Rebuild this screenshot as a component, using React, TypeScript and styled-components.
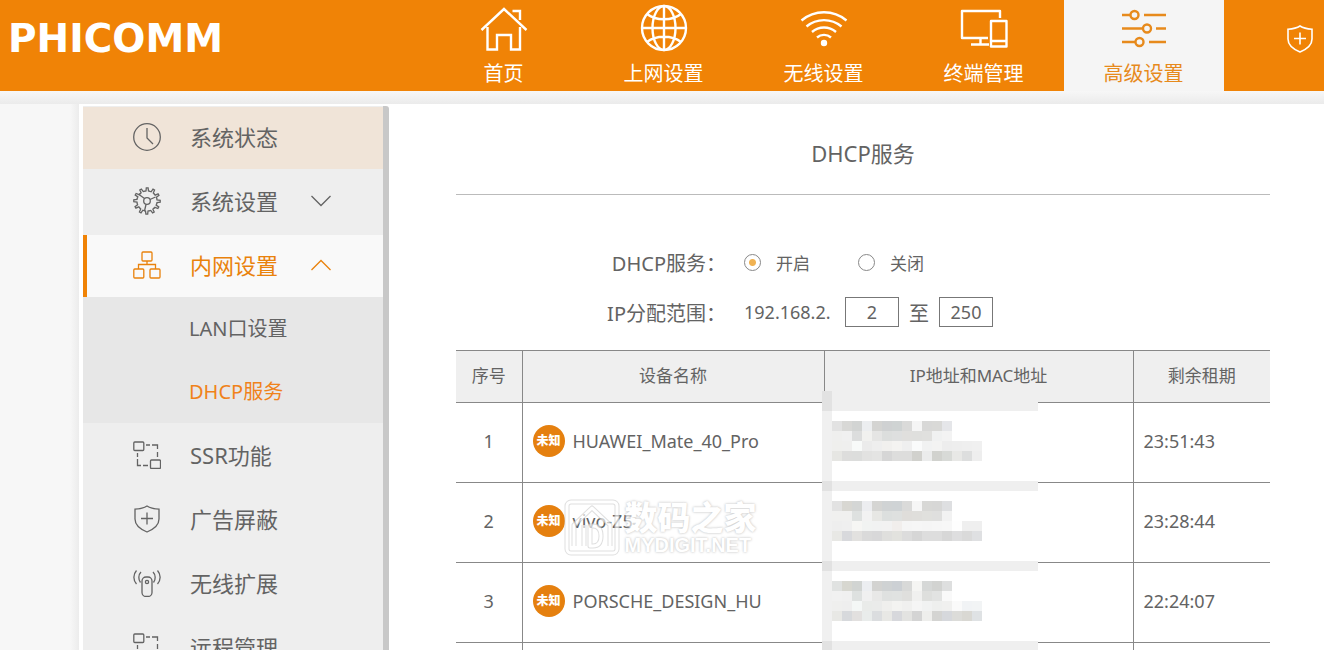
import React from "react";
import styled, { createGlobalStyle, css } from "styled-components";

const ORANGE = "#f08306";
const INK = "#636363";

const GlobalStyle = createGlobalStyle`
  *, *::before, *::after { box-sizing: border-box; }
  body {
    margin: 0;
    background: #f5f5f5;
    color: ${INK};
    font-family: "Noto Sans", "Noto Sans CJK SC", sans-serif;
    font-weight: 400;
    font-size: 18px;
  }
`;

/* ---------- page frame ---------- */

const Page = styled.div`
  display: flex;
  flex-direction: column;
  height: 100vh;
  overflow: hidden;
`;

const Header = styled.header`
  display: flex;
  flex: none;
  height: 91px;
  background: ${ORANGE};
  color: #fff;
`;

const Brand = styled.h1`
  flex: 1;
  margin: 0;
  padding: 16px 0 0 8px;
  font: bold 39px/46px "DejaVu Sans", sans-serif;
`;

const Nav = styled.nav`
  display: flex;
`;

const NavLink = styled.a<{ $active?: boolean }>`
  display: flex;
  flex-direction: column;
  align-items: center;
  gap: 7px;
  width: 160px;
  padding: 4px 1px 0 0;
  font-size: 20px;
  line-height: 30px;
  text-decoration: none;
  color: ${(p) => (p.$active ? "#e78a1c" : "#fff")};
  background: ${(p) => (p.$active ? "#f5f5f5" : "transparent")};
`;

const GuardButton = styled.button`
  width: 100px;
  padding: 0 10px 14px 0;
  border: 0;
  background: none;
  color: #fff;
  display: flex;
  align-items: center;
  justify-content: flex-end;
`;

const Stage = styled.div`
  display: flex;
  flex: 1;
  min-height: 0;
  padding: 13px 0 0 79px;
  background: linear-gradient(#f7f7f7, #ebebeb 13px, transparent 13px), linear-gradient(90deg, #f7f7f7 70px, #ececec 79px);
`;

const Panel = styled.div`
  display: flex;
  flex: 1;
  min-width: 0;
  padding: 2px 0 0 4px;
  background: #fff;
`;

/* ---------- side menu ---------- */

const Side = styled.aside`
  flex: none;
  width: 306px;
  border-right: 6px solid #c8c8c8;
  border-top-right-radius: 3px;
  background: #eee;
  overflow: hidden;
`;

const Menu = styled.ul`
  display: flex;
  flex-direction: column;
  gap: 2px;
  margin: 0;
  padding: 1px 0 0;
  list-style: none;
`;

const MenuLink = styled.a<{ $tone?: "visited" | "open" }>`
  display: flex;
  align-items: center;
  height: 62px;
  padding: 0 0 2px 50px;
  font-size: 22px;
  color: ${INK};
  text-decoration: none;
  ${(p) => p.$tone === "visited" && css`background: #f0e4d8;`}
  ${(p) =>
    p.$tone === "open" &&
    css`
      background: #f9f9f9;
      color: #e9820c;
      box-shadow: inset 4px 0 ${ORANGE};
    `}
`;

const MenuText = styled.span`
  margin: 0 33px 0 29px;
  padding-bottom: 2px;
`;

const SubMenu = styled.ul`
  margin: 0;
  padding: 0;
  list-style: none;
  background: #e7e7e7;
`;

const SubLink = styled.a<{ $active?: boolean }>`
  display: flex;
  align-items: center;
  height: 63px;
  padding: 0 0 2px 106px;
  font-size: 20px;
  text-decoration: none;
  color: ${(p) => (p.$active ? "#f0821a" : INK)};
`;

/* ---------- content ---------- */

const Content = styled.main`
  flex: 1;
  min-width: 0;
  padding: 0 54px 0 67px;
`;

const Title = styled.h2`
  margin: 0 0 42px;
  padding: 31px 0 25px;
  border-bottom: 1px solid #bbb;
  text-align: center;
  font-size: 22px;
  line-height: 32px;
  font-weight: inherit;
`;

const Field = styled.div`
  display: grid;
  grid-template-columns: 270px 1fr;
  column-gap: 18px;
  align-items: center;
  height: 50px;
`;

const FieldName = styled.span`
  text-align: right;
  font-size: 20px;
`;

const Options = styled.div`
  display: flex;
  gap: 48px;
`;

const Option = styled.label`
  display: flex;
  align-items: center;
  gap: 15px;
  font-size: 17px;
`;

const Radio = styled.input`
  appearance: none;
  width: 17px;
  height: 17px;
  margin: 0;
  border: 1px solid #888;
  border-radius: 50%;
  background: #fff;
  &:checked {
    background: radial-gradient(circle, #f0b252 3px, #fff 4px);
  }
`;

const Range = styled.div`
  display: flex;
  align-items: center;
  font-size: 18px;
`;

const Prefix = styled.span`
  width: 101px;
`;

const RangeWord = styled.span`
  width: 40px;
  text-align: center;
  font-size: 20px;
`;

const Octet = styled.input`
  width: 54px;
  height: 30px;
  padding: 0;
  border: 1px solid #777;
  background: #fff;
  color: ${INK};
  font: inherit;
  text-align: center;
`;

const Leases = styled.table`
  width: 100%;
  margin-top: 13px;
  border-collapse: collapse;
  table-layout: fixed;
  border-top: 1px solid #888;
  font-size: 17px;
`;

const HeadCell = styled.th`
  height: 52px;
  padding: 0 0 4px;
  border-left: 1px solid #888;
  border-bottom: 1px solid #888;
  background: #efefef;
  font-weight: inherit;
  &:first-child { border-left: 0; }
`;

const Cell = styled.td<{ $center?: boolean }>`
  position: relative;
  height: 80px;
  padding: 0 10px 4px;
  border-left: 1px solid #888;
  border-bottom: 1px solid #888;
  text-align: ${(p) => (p.$center ? "center" : "left")};
  font-size: 18px;
  &:first-child { border-left: 0; }
`;

const Device = styled.div`
  position: relative;
  display: flex;
  align-items: center;
  gap: 8px;
`;

const Badge = styled.span`
  width: 32px;
  height: 32px;
  border-radius: 50%;
  background: #e5800f;
  color: #fff;
  font-size: 12px;
  font-weight: 900;
  line-height: 32px;
  text-align: center;
`;

const MosaicArt = styled.svg<{ $lead: boolean }>`
  position: absolute;
  left: -3px;
  top: ${(p) => (p.$lead ? "-12px" : "-2px")};
`;

/* ---------- watermark ---------- */

const Watermark = styled.div`
  position: absolute;
  left: 31px;
  top: -6px;
  display: flex;
  align-items: center;
  gap: 5px;
  color: #fff;
  opacity: 0.65;
  pointer-events: none;
  white-space: nowrap;
  text-shadow: 0 0 2px #aaa, 0 0 3px #ccc;
`;

const MarkWords = styled.div`
  display: flex;
  flex-direction: column;
`;

const MarkName = styled.span`
  font: 900 33px/34px "Noto Sans CJK SC", sans-serif;
`;

const MarkSite = styled.span`
  font: bold 20px/24px "Liberation Sans", sans-serif;
`;

/* ---------- icons ---------- */

type IconName = "home" | "globe" | "wifi" | "devices" | "sliders" | "clock" | "gear" | "lan" | "link" | "shield" | "extender" | "down" | "up";

const teeth = Array.from({ length: 12 }, (_, i) => i * 30);

const drawings: Record<IconName, { box: string; art: React.ReactNode }> = {
  home: {
    box: "0 0 48 48",
    art: <path d="M1.500 26 24 5 46.500 26M7.500 23v22.500h9.500V31h14v14.500H40V23M32.500 7h7.500V16" />,
  },
  globe: {
    box: "0 0 48 48",
    art: (
      <>
        <circle cx="24" cy="24" r="22" />
        <ellipse cx="24" cy="24" rx="11.500" ry="22" />
        <path d="M24 2v44M2 24h44M7 10c9 7 25 7 34 0M7 38c9-7 25-7 34 0" />
      </>
    ),
  },
  wifi: {
    box: "0 0 48 48",
    art: (
      <>
        <path d="M1.500 16.500c13-11 32-11 45 0M6.500 22.500c10-8.500 25-8.500 35 0M12 28c7-6 17-6 24 0M17 33.500c4-3.500 10-3.500 14 0" />
        <circle cx="24" cy="39" r="2" fill="currentColor" />
      </>
    ),
  },
  devices: {
    box: "0 0 48 48",
    art: (
      <path d="M40 14V7H2v27h26M20.500 34v6M11 40.500h18M31 17h15.500v25.500H31zM31 37h15.500" strokeLinejoin="round" />
    ),
  },
  sliders: {
    box: "0 0 48 48",
    art: (
      <>
        <path d="M2 11h8M24 11h22M2 24.500h21M36 24.500h10M2 38h13M29 38h17" />
        <circle cx="14.500" cy="11" r="4" />
        <circle cx="27" cy="24.500" r="4" />
        <circle cx="19.500" cy="38" r="4" />
      </>
    ),
  },
  clock: {
    box: "0 0 28 28",
    art: (
      <>
        <circle cx="14" cy="14" r="13.300" />
        <path d="M14 5v10l6 6" />
      </>
    ),
  },
  gear: {
    box: "0 0 28 28",
    art: (
      <>
        <circle cx="14" cy="14" r="3.300" />
        <path d="M6 7.500 11.500 11.500M22.500 10 17 12.500M13 17.500 11.500 24" />
        {teeth.map((a) => (
          <path key={a} transform={`rotate(${a} 14 14)`} d="M11.300 4.300 13 4 13.300 .8h1.800L15.500 4l1.500.3" />
        ))}
      </>
    ),
  },
  lan: {
    box: "0 0 28 28",
    art: (
      <>
        <rect x="9" y="1" width="10" height="9" rx="1" />
        <rect x=".8" y="18" width="10" height="9" rx="1" />
        <rect x="17" y="18" width="10" height="9" rx="1" />
        <path d="M14 10v3.500M5.500 18v-4.500h17V18" />
      </>
    ),
  },
  link: {
    box: "0 0 28 28",
    art: (
      <>
        <rect x=".8" y="1" width="10" height="8.500" rx="1" />
        <rect x="17.500" y="19" width="10" height="8.500" rx="1" />
        <path d="M13 4h4M19 4h5.500v4M24.500 11v5M4.500 12v4M4.500 18v6.500H8M10 24.500h5" />
      </>
    ),
  },
  shield: {
    box: "0 0 28 28",
    art: (
      <path d="M14 1c4 2.700 8 3 12 3.200V14c0 7-6 10.500-12 13C8 24.500 2 21 2 14V4.200C6 4 10 3.700 14 1zM14 7.500v12M8 13.500h12" />
    ),
  },
  extender: {
    box: "0 0 28 28",
    art: (
      <>
        <rect x="9" y="8" width="10" height="19.500" rx="4" />
        <circle cx="14" cy="13" r="1.600" />
        <path d="M3.500 1.500c-3.500 4-3.500 9.500 0 13.500M8 3c-2.800 2.800-2.800 7.500-.5 10.500M24.500 1.500c3.500 4 3.500 9.500 0 13.500M20 3c2.800 2.800 2.800 7.500.5 10.500" />
      </>
    ),
  },
  down: { box: "0 0 20 20", art: <path d="M.5 5 10 14.500 19.500 5" /> },
  up: { box: "0 0 20 20", art: <path d="M.5 15 10 5.500 19.500 15" /> },
};

function Icon({ name, size, weight = 1.3 }: { name: IconName; size: number; weight?: number }) {
  const { box, art } = drawings[name];
  return (
    <svg width={size} height={size} viewBox={box} fill="none" stroke="currentColor" strokeWidth={weight} aria-hidden="true">
      {art}
    </svg>
  );
}

/* ---------- data ---------- */

const navItems: { icon: IconName; label: string; active?: boolean }[] = [
  { icon: "home", label: "首页" },
  { icon: "globe", label: "上网设置" },
  { icon: "wifi", label: "无线设置" },
  { icon: "devices", label: "终端管理" },
  { icon: "sliders", label: "高级设置", active: true },
];

const menuItems: {
  icon: IconName;
  label: string;
  tone?: "visited" | "open";
  arrow?: IconName;
  children?: { label: string; active?: boolean }[];
}[] = [
  { icon: "clock", label: "系统状态", tone: "visited" },
  { icon: "gear", label: "系统设置", arrow: "down" },
  {
    icon: "lan",
    label: "内网设置",
    tone: "open",
    arrow: "up",
    children: [{ label: "LAN口设置" }, { label: "DHCP服务", active: true }],
  },
  { icon: "link", label: "SSR功能" },
  { icon: "shield", label: "广告屏蔽" },
  { icon: "extender", label: "无线扩展" },
  { icon: "link", label: "远程管理" },
];

const blocks = [
  [
    "e2e2e2 d8d8d6 d2d4d3 eceef0 d4d4d2 cfd1d2 cfd3d3 dadad9 f5f5f5 d8d8d7 d9d9d7 e5e6e9",
    "efefee f0f0f0 dcdddd f1f1ef e5e5e4 dcdedd dedfdf e0dfdd dfdfdd e0e0de f0f1f1 f3f3f3",
    "efefed efefee f8faf9 ebebeb eeeeee f1f0ee f4f3f1 efefef fafbfb f1f2f2 f3f3f2 ededed eeeeee efefef f0f0f0",
    "e6e6e3 dddddc dcdddc e2e2e1 e4e4e3 d6d6d6 dddddc dddddc d1d1cd ebecec d1d2ce d8dad7 e8e8e6 dddede eeeeee",
  ],
  [
    "e2e2e2 d8d7d2 d4d6d5 ecedf0 d5d5d3 d0d3d4 cfd3d5 dadad9 f6f6f6 d8d8d6 d7d7d6 dedfe1",
    "f0f0ef f0f0ef dee1e0 f2f2f2 e7e7e4 dcdfde dee0df dfddda dfdedb e0e0dd dfdfde f2f2f2",
    "eeeeee efefef f6f6f4 f1f3f2 f1f2f2 f2f2f2 f1eeec f5f5f5 f6f6f6 f5f5f5 f6f6f6 f7f7f7 fefefe efefef efefef",
    "e8e8e5 d8d9dc e2e1df dadada d8d8d9 dfdfdd e2e2de dcdcdc d6d6d6 dddddd dddddd d7d7d7 dededf dadada dfe0e2",
  ],
  [
    "e0e2e1 d7d7d0 d1d4d2 eceef1 d3d3d1 cfd2d3 ccd0d4 d8d9d8 f5f5f3 d6d8d7 d2d3d1 dedfdf",
    "f1f1f1 f0f0f0 dee1e0 f0f0f0 e8e8e7 dfe1e0 e0e2e1 dfdfdd f0f0ef dedfdd e2e3e2 f9f9f9",
    "efefee eeeeee f4f7f6 e9ebe9 eaebea efefed f3f3f1 f0f0ef f5f5f5 f1f2f2 eeefee f0f0ef fafafa f1f3f5 f2f4f5",
    "e8e8e5 d7d9dc e2e0df e9eceb dbdddf e8e8e5 d7d8dc e3e3e1 d4d4d4 eeeeec d4d4d2 d6d8dc dcdcd9 d9d8d3 dfe2e4",
  ],
  [],
];

function Mosaic({ index }: { index: number }) {
  const lead = index === 0;
  const y = lead ? 10 : 0;
  return (
    <MosaicArt $lead={lead} width={216} height={80 + y} shapeRendering="crispEdges" role="img" aria-label="已隐藏">
      <rect width={216} height={80 + y} fill="#fff" />
      <rect width={216} height={10 + y} fill="#efefef" />
      <rect y={10 + y} width={10} height={70} fill="#f0f0f0" />
      <rect width={10} height={10 + y} fill="#e2e2e2" />
      {blocks[index].map((line, r) =>
        line
          .split(" ")
          .map((c, i) => <rect key={`${r}-${i}`} x={10 + i * 10} y={y + 20 + r * 10} width={10} height={10} fill={`#${c}`} />),
      )}
    </MosaicArt>
  );
}

const leases = [
  { name: "HUAWEI_Mate_40_Pro", left: "23:51:43" },
  { name: "vivo-Z5", left: "23:28:44", marked: true },
  { name: "PORSCHE_DESIGN_HU", left: "22:24:07" },
  { name: "", left: "" },
];

function SiteMark() {
  return (
    <Watermark aria-hidden="true">
      <svg width="56" height="58" viewBox="0 0 56 58" fill="none" strokeLinejoin="round">
        {[
          { c: "#cfcfcf", w: 5 },
          { c: "#fff", w: 3 },
        ].map(({ c, w }) => (
          <g key={c} stroke={c} strokeWidth={w}>
            <rect x="3" y="3" width="50" height="51" rx="4" />
            <path d="M10 47V26L28 9l18 17v21M20 26v21M26 27h3q8 0 8 10t-8 10h-3z" />
          </g>
        ))}
      </svg>
      <MarkWords>
        <MarkName>数码之家</MarkName>
        <MarkSite>MYDIGIT.NET</MarkSite>
      </MarkWords>
    </Watermark>
  );
}

export default function App() {
  return (
    <>
      <GlobalStyle />
      <Page>
        <Header>
          <Brand>PHICOMM</Brand>
          <Nav>
            {navItems.map((n) => (
              <NavLink key={n.label} href="#" $active={n.active}>
                <Icon name={n.icon} size={48} weight={2.4} />
                {n.label}
              </NavLink>
            ))}
          </Nav>
          <GuardButton aria-label="安全">
            <Icon name="shield" size={28} weight={1.6} />
          </GuardButton>
        </Header>
        <Stage>
          <Panel>
            <Side>
              <Menu>
                {menuItems.map((m) => (
                  <li key={m.label}>
                    <MenuLink href="#" $tone={m.tone}>
                      <Icon name={m.icon} size={28} />
                      <MenuText>{m.label}</MenuText>
                      {m.arrow && <Icon name={m.arrow} size={20} />}
                    </MenuLink>
                    {m.children && (
                      <SubMenu>
                        {m.children.map((s) => (
                          <li key={s.label}>
                            <SubLink href="#" $active={s.active}>
                              {s.label}
                            </SubLink>
                          </li>
                        ))}
                      </SubMenu>
                    )}
                  </li>
                ))}
              </Menu>
            </Side>
            <Content>
              <Title>DHCP服务</Title>
              <Field role="radiogroup" aria-labelledby="dhcp-name">
                <FieldName id="dhcp-name">DHCP服务：</FieldName>
                <Options>
                  <Option>
                    <Radio type="radio" name="dhcp" defaultChecked />
                    开启
                  </Option>
                  <Option>
                    <Radio type="radio" name="dhcp" />
                    关闭
                  </Option>
                </Options>
              </Field>
              <Field>
                <FieldName>IP分配范围：</FieldName>
                <Range>
                  <Prefix>192.168.2.</Prefix>
                  <Octet aria-label="起始地址" defaultValue="2" />
                  <RangeWord>至</RangeWord>
                  <Octet aria-label="结束地址" defaultValue="250" />
                </Range>
              </Field>
              <Leases>
                <colgroup>
                  <col width="66" />
                  <col />
                  <col width="309" />
                  <col width="137" />
                </colgroup>
                <thead>
                  <tr>
                    <HeadCell>序号</HeadCell>
                    <HeadCell>设备名称</HeadCell>
                    <HeadCell>IP地址和MAC地址</HeadCell>
                    <HeadCell>剩余租期</HeadCell>
                  </tr>
                </thead>
                <tbody>
                  {leases.map((l, i) => (
                    <tr key={i}>
                      <Cell $center>{l.name && i + 1}</Cell>
                      <Cell>
                        {l.name && (
                          <Device>
                            <Badge>未知</Badge>
                            {l.name}
                            {l.marked && <SiteMark />}
                          </Device>
                        )}
                      </Cell>
                      <Cell>
                        <Mosaic index={i} />
                      </Cell>
                      <Cell>{l.left}</Cell>
                    </tr>
                  ))}
                </tbody>
              </Leases>
            </Content>
          </Panel>
        </Stage>
      </Page>
    </>
  );
}
